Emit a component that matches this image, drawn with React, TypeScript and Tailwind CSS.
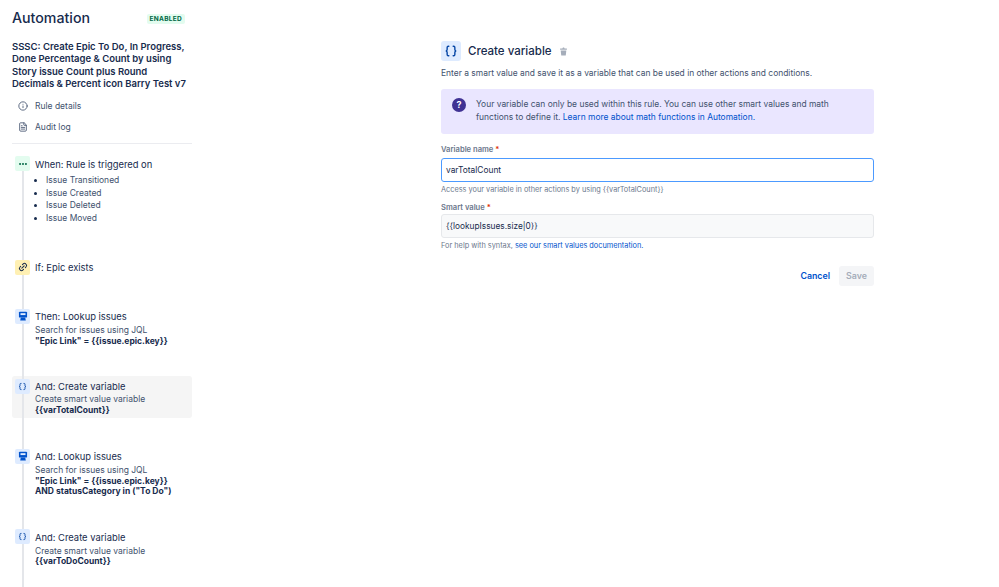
import { Info, FileText, Link2, MoreHorizontal } from "lucide-react";
import type { ReactNode } from "react";

function StepIcon({ bg, children }: { bg: string; children: ReactNode }) {
  return (
    <div className={`relative z-10 -mt-[1.5px] flex h-[15px] w-[15px] shrink-0 items-center justify-center rounded-[2px] ${bg}`}>
      {children}
    </div>
  );
}

function Braces({ size }: { size: number }) {
  return (
    <svg width={size} height={size} viewBox="0 0 16 16" fill="none" stroke="#0747a6" strokeWidth="1.6" strokeLinecap="round">
      <path d="M5.5 2.5H5C4 2.5 3.6 3 3.6 4v2.4C3.6 7.3 3 8 2 8c1 0 1.6.7 1.6 1.6V12c0 1 .4 1.5 1.4 1.5h.5" />
      <path d="M10.5 2.5h.5c1 0 1.4.5 1.4 1.5v2.4c0 .9.6 1.6 1.6 1.6-1 0-1.6.7-1.6 1.6V12c0 1-.4 1.5-1.4 1.5h-.5" />
    </svg>
  );
}

function Lookup() {
  return (
    <svg width="10" height="10" viewBox="0 0 16 16">
      <rect x="1.5" y="1" width="13" height="9.5" rx="1.5" fill="#0052cc" />
      <rect x="4" y="3.5" width="8" height="3" fill="#deebff" />
      <path d="M4.5 10.5h7l1 4.5h-9z" fill="#0052cc" />
    </svg>
  );
}

function Step({
  icon,
  title,
  children,
  className,
}: {
  icon: ReactNode;
  title: string;
  children?: ReactNode;
  className?: string;
}) {
  return (
    <div className={`flex gap-[5px] rounded-[3px] pl-[3px] ${className ?? ""}`}>
      {icon}
      <div className="min-w-0 flex-1">
        <div className="text-[9.4px] leading-[14px] text-[#172b4d]">{title}</div>
        {children}
      </div>
    </div>
  );
}

function Sub({ children }: { children: ReactNode }) {
  return <div className="text-[8.5px] leading-[10.5px] text-[#42526e]">{children}</div>;
}

function Code({ children }: { children: ReactNode }) {
  return <div className="text-[8.5px] font-bold leading-[10.5px] text-[#172b4d]">{children}</div>;
}

export default function App() {
  return (
    <div
      className="flex h-[587px] w-[999px] overflow-hidden bg-white text-[#172b4d]"
      style={{ fontFamily: "Inter, sans-serif" }}
    >
      {/* Sidebar */}
      <div className="w-[192px] shrink-0 pl-3">
        <div className="flex h-[37px] items-center justify-between pr-[7px]">
          <h1 className="text-[14.2px] font-medium leading-none">Automation</h1>
          <span className="rounded-[2px] bg-[#e3fcef] px-[3px] py-[1px] text-[6.5px] font-bold leading-[8px] tracking-[0.3px] text-[#006644]">
            ENABLED
          </span>
        </div>
        <div className="mt-[4px] whitespace-nowrap text-[9.5px] font-semibold leading-[12.4px] text-[#172b4d]">
          SSSC: Create Epic To Do, In Progress,
          <br />
          Done Percentage &amp; Count by using
          <br />
          Story issue Count plus Round
          <br />
          Decimals &amp; Percent icon Barry Test v7
        </div>
        <div className="mt-[9px] flex items-center gap-[7px] pl-[6px] text-[8.5px] leading-3 text-[#42526e]">
          <Info size={10} />
          Rule details
        </div>
        <div className="mt-[9px] flex items-center gap-[7px] pl-[6px] text-[8.5px] leading-3 text-[#42526e]">
          <FileText size={10} />
          Audit log
        </div>
        <div className="mt-[10px] h-px bg-[#ebecf0]" />

        <div className="relative mt-[14px]">
          <div className="absolute left-[10px] top-0 h-[600px] w-[1.5px] bg-[#e4e6ea]" />
          <Step
            title="When: Rule is triggered on"
            icon={
              <StepIcon bg="bg-[#e3fcef]">
                <MoreHorizontal size={10} strokeWidth={3} className="text-[#006644]" />
              </StepIcon>
            }
          >
            <ul className="ml-[11px] mt-[2px] list-disc text-[8.5px] leading-[12.9px] text-[#42526e] marker:text-[#172b4d]">
              <li>Issue Transitioned</li>
              <li>Issue Created</li>
              <li>Issue Deleted</li>
              <li>Issue Moved</li>
            </ul>
          </Step>
          <Step
            className="mt-[36px]"
            title="If: Epic exists"
            icon={
              <StepIcon bg="bg-[#fff0b3]">
                <Link2 size={10} strokeWidth={2.5} className="-rotate-45 text-[#172b4d]" />
              </StepIcon>
            }
          />
          <Step className="mt-[35px]" title="Then: Lookup issues" icon={<StepIcon bg="bg-[#deebff]"><Lookup /></StepIcon>}>
            <div className="mt-[1px]">
              <Sub>Search for issues using JQL</Sub>
              <Code>"Epic Link" = {"{{issue.epic.key}}"}</Code>
            </div>
          </Step>
          <Step
            className="mt-[30px] h-[42px] bg-[#f5f5f5] pt-[4px]"
            title="And: Create variable"
            icon={<StepIcon bg="bg-[#deebff]"><Braces size={9} /></StepIcon>}
          >
            <Sub>Create smart value variable</Sub>
            <Code>{"{{varTotalCount}}"}</Code>
          </Step>
          <Step className="mt-[32px]" title="And: Lookup issues" icon={<StepIcon bg="bg-[#deebff]"><Lookup /></StepIcon>}>
            <div className="mt-[1px]">
              <Sub>Search for issues using JQL</Sub>
              <Code>"Epic Link" = {"{{issue.epic.key}}"}</Code>
              <Code>AND statusCategory in ("To Do")</Code>
            </div>
          </Step>
          <Step className="mt-[34px]" title="And: Create variable" icon={<StepIcon bg="bg-[#deebff]"><Braces size={9} /></StepIcon>}>
            <div className="mt-[1px]">
              <Sub>Create smart value variable</Sub>
              <Code>{"{{varToDoCount}}"}</Code>
            </div>
          </Step>
        </div>
      </div>

      {/* Main form */}
      <div className="ml-[249px] w-[433px] shrink-0 pt-[41px]">
        <div className="flex items-center">
          <div className="flex h-5 w-5 items-center justify-center rounded-[3px] bg-[#deebff]">
            <Braces size={14} />
          </div>
          <h2 className="ml-[7px] text-[11.5px] font-medium leading-5 text-[#172b4d]">Create variable</h2>
          <svg width="9" height="9" viewBox="0 0 16 16" className="ml-[7px]">
            <path d="M2 2.5h4L7 1h2l1 1.5h4V5H2zM3 6h10l-1 9H4z" fill="#a5adba" />
          </svg>
        </div>
        <p className="mt-[6px] text-[8.45px] leading-3 text-[#42526e]">
          Enter a smart value and save it as a variable that can be used in other actions and conditions.
        </p>
        <div className="mt-[10px] flex h-[45px] rounded-[3px] bg-[#eae6ff] pl-[11px] pt-[9px]">
          <div className="flex h-[14px] w-[14px] shrink-0 items-center justify-center rounded-full bg-[#403294] text-[9px] font-bold text-white">
            ?
          </div>
          <p className="ml-[10px] text-[8.45px] leading-[12.5px] text-[#42526e]">
            Your variable can only be used within this rule. You can use other smart values and math
            <br />
            functions to define it. <span className="text-[#0052cc]">Learn more about math functions in Automation.</span>
          </p>
        </div>
        <label className="mt-[11px] block text-[7.6px] font-semibold leading-[10px] text-[#6b778c]">
          Variable name <span className="text-[#de350b]">*</span>
        </label>
        <div className="mt-[3px] flex h-[24px] items-center rounded-[3px] border-[1.5px] border-[#4c9aff] bg-white pl-1 text-[8.4px] text-[#172b4d]">
          varTotalCount
        </div>
        <p className="mt-[3px] text-[7.35px] leading-[10px] text-[#6b778c]">
          Access your variable in other actions by using {"{{varTotalCount}}"}
        </p>
        <label className="mt-[8px] block text-[7.6px] font-semibold leading-[10px] text-[#6b778c]">
          Smart value <span className="text-[#de350b]">*</span>
        </label>
        <div className="mt-[1px] flex h-[24px] items-center rounded-[3px] border-[1.5px] border-[#e6e8eb] bg-[#f8f9fa] pl-1 text-[8.3px] text-[#172b4d]">
          {"{{lookupIssues.size|0}}"}
        </div>
        <p className="mt-[3px] text-[7.35px] leading-[10px] text-[#6b778c]">
          For help with syntax, <span className="text-[#0052cc]">see our smart values documentation.</span>
        </p>
        <div className="mt-[15px] flex items-center justify-end gap-[9px]">
          <span className="text-[8.8px] font-semibold text-[#0052cc]">Cancel</span>
          <span className="flex h-5 w-[35px] items-center justify-center rounded-[3px] bg-[#f4f5f7] text-[8.8px] font-semibold text-[#a5adba]">
            Save
          </span>
        </div>
      </div>
    </div>
  );
}
